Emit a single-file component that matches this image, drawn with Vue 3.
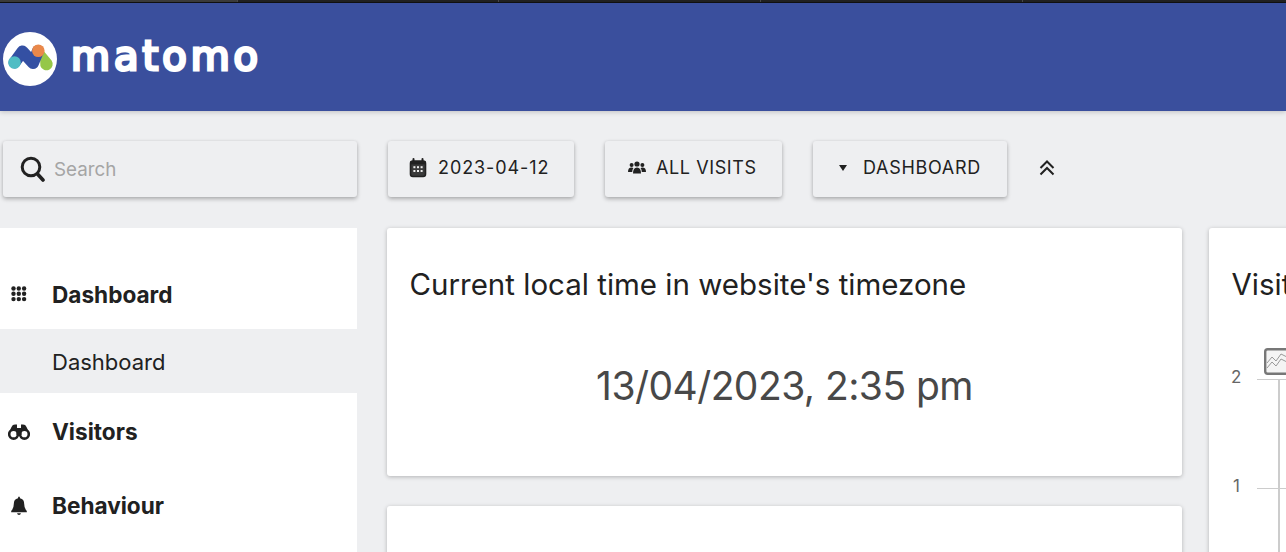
<script setup>
const nav = [
  { label: 'Visitors', icon: 'binoculars' },
  { label: 'Behaviour', icon: 'bell' }
]
const dots = [0, 1, 2]
</script>

<template>
  <div class="page">
    <div class="strip">
      <i class="tab on"></i><i class="tab"></i><i class="tab"></i><i class="tab"></i><i class="tab last"></i>
    </div>
    <header class="navbar">
      <svg class="logo-mark" width="54" height="54" viewBox="0 0 54 54" aria-hidden="true">
        <circle cx="27" cy="27" r="27" fill="#fff" />
        <path d="M36.5 14 L48.6 28.5 A6.3 6.3 0 1 1 37.4 34 Z" fill="#95c748"/>
        <path d="M11.5 30.5 L19.5 19.5 L30 31 L35 19" fill="none" stroke="#3450a3" stroke-width="12" stroke-linecap="round" stroke-linejoin="round"/>
        <circle cx="11.5" cy="30.5" r="6.3" fill="#4fbdc4" />
        <circle cx="35.3" cy="18.7" r="6.3" fill="#e9884a" />
      </svg>
      <span class="wordmark">matomo</span>
    </header>

    <div class="content">
      <aside class="side">
        <div class="search card-raised">
          <svg width="25" height="26" viewBox="0 0 25 26" aria-hidden="true">
            <circle cx="11" cy="11" r="8.8" fill="none" stroke="#212121" stroke-width="3" />
            <path d="M17.5 18 L23 24" stroke="#212121" stroke-width="3.6" stroke-linecap="round" />
          </svg>
          <span class="placeholder">Search</span>
        </div>

        <nav class="menu">
          <div class="menu-head first">
            <span class="menu-icon">
              <svg width="16" height="16" viewBox="0 0 16 16" aria-hidden="true">
                <g fill="#212121">
                  <template v-for="r in dots" :key="r">
                    <circle v-for="c in dots" :key="c" :cx="2.5 + c * 5.3" :cy="2.5 + r * 5.3" r="2.2" />
                  </template>
                </g>
              </svg>
            </span>
            <span>Dashboard</span>
          </div>
          <div class="menu-sub">Dashboard</div>
          <div v-for="item in nav" :key="item.label" class="menu-head" :class="item.icon">
            <span class="menu-icon">
              <svg v-if="item.icon === 'binoculars'" width="22" height="16" viewBox="0 0 22 16" aria-hidden="true">
                <path d="M3.5 3 Q4.5 0.6 7 0.6 H9 V4 H13 V0.6 H15 Q17.5 0.6 18.5 3 L21.8 10 H0.2 Z" fill="#212121"/>
                <circle cx="5.6" cy="10.2" r="4.4" fill="#fff" stroke="#212121" stroke-width="2.6"/>
                <circle cx="16.4" cy="10.2" r="4.4" fill="#fff" stroke="#212121" stroke-width="2.6"/>
                <rect x="8.5" y="4" width="5" height="7" fill="#212121"/>
              </svg>
              <svg v-else width="16" height="20" viewBox="0 0 16 20" aria-hidden="true">
                <path d="M8 0.6 Q9 0.6 9 2.2 Q13.2 3 13.2 8 Q13.2 12.4 15.8 15 V16.3 H0.2 V15 Q2.8 12.4 2.8 8 Q2.8 3 7 2.2 Q7 0.6 8 0.6 Z" fill="#212121"/>
                <path d="M6 17.3 H10 Q9.6 19 8 19 Q6.4 19 6 17.3 Z" fill="#212121"/>
              </svg>
            </span>
            <span>{{ item.label }}</span>
          </div>
        </nav>
      </aside>

      <main class="main">
        <div class="toolbar">
          <div class="btn card-raised date">
            <svg width="18" height="20" viewBox="0 0 18 20" aria-hidden="true">
              <path d="M4.5 1 V4 M13.5 1 V4" stroke="#212121" stroke-width="2" stroke-linecap="round"/>
              <rect x="1.5" y="3" width="15" height="15.5" rx="2.4" fill="#3a3a3a" stroke="#212121" stroke-width="1.6"/>
              <rect x="1.5" y="3" width="15" height="3.4" fill="#212121"/>
              <g fill="#eee">
                <rect x="4.4" y="8.2" width="2" height="2"/><rect x="8" y="8.2" width="2" height="2"/><rect x="11.6" y="8.2" width="2" height="2"/>
                <rect x="4.4" y="12" width="2" height="2"/><rect x="8" y="12" width="2" height="2"/><rect x="11.6" y="12" width="2" height="2"/>
              </g>
            </svg>
            <span>2023-04-12</span>
          </div>
          <div class="btn card-raised segment">
            <svg width="18" height="13" viewBox="0 0 18 13" aria-hidden="true">
              <g fill="#212121">
                <circle cx="9" cy="3" r="2.6"/><circle cx="3.6" cy="4" r="2"/><circle cx="14.4" cy="4" r="2"/>
                <path d="M0 11 Q0 6.6 3.6 6.6 Q5 6.6 5.4 7.2 Q4.2 8.4 4.2 11 Z"/>
                <path d="M18 11 Q18 6.6 14.4 6.6 Q13 6.6 12.6 7.2 Q13.8 8.4 13.8 11 Z"/>
                <path d="M5 12.4 Q5 6.4 9 6.4 Q13 6.4 13 12.4 Z"/>
              </g>
            </svg>
            <span>ALL VISITS</span>
          </div>
          <div class="btn card-raised dash">
            <svg width="8" height="6" viewBox="0 0 8 6" aria-hidden="true"><path d="M0 0 H8 L4 6 Z" fill="#212121"/></svg>
            <span>DASHBOARD</span>
          </div>
          <svg class="collapse" width="18" height="18" viewBox="0 0 18 18" aria-hidden="true">
            <path d="M2.5 9 L9 2.5 L15.5 9 M2.5 15.5 L9 9 L15.5 15.5" fill="none" stroke="#212121" stroke-width="2"/>
          </svg>
        </div>

        <div class="columns">
          <div class="col">
            <section class="card tall">
              <h2>Current local time in website's timezone</h2>
              <p class="clock">13/04/2023, 2:35 pm</p>
            </section>
            <section class="card lower">
              <h2>Visits by Local Time</h2>
            </section>
          </div>
          <div class="col right">
            <section class="card chart-card">
              <h2>Visits</h2>
              <div class="chart">
                <svg class="chart-icon" width="28" height="27" viewBox="0 0 28 27" aria-hidden="true">
                  <rect x="1.2" y="1.2" width="25.6" height="24.6" rx="2.5" fill="#f4f4f4" stroke="#777" stroke-width="2.4"/>
                  <path d="M3 15 L8 9 L12 13 L17 6 L25 10" fill="none" stroke="#999" stroke-width="1"/>
                  <path d="M3 20 L8 14 L12 18 L17 11 L25 15" fill="none" stroke="#999" stroke-width="1"/>
                </svg>
                <div class="axis"></div>
                <div class="tick t2"><span>2</span><i></i></div>
                <div class="tick t1"><span>1</span><i></i></div>
              </div>
            </section>
          </div>
        </div>
      </main>
    </div>
  </div>
</template>

<style>
html, body { margin: 0; overflow: hidden; background: #eeeff1; }
</style>

<style scoped>
.page {
  width: 1286px;
  height: 552px;
  overflow: hidden;
  background: #eeeff1;
  font-family: Inter, "Liberation Sans", sans-serif;
  color: #212121;
}
.strip {
  height: 3px;
  box-sizing: border-box;
  border-bottom: 1px solid #111;
  background: #222;
  display: grid;
  grid-template-columns: 238px 261px 262px 262px 1fr;
}
.tab { display: block; border-right: 1px solid #4a4a4a; }
.tab.on { background: #3c3c3c; }
.tab.last { border-right: 0; }
.navbar {
  height: 108px;
  background: #3a4f9d;
  display: flex;
  align-items: center;
  padding: 0 0 0 3px;
  box-sizing: border-box;
  box-shadow: 0 1px 5px rgba(0, 0, 0, .2);
  position: relative;
}
.logo-mark { margin-top: 3px; }
.wordmark {
  margin-left: 14px;
  margin-top: -3px;
  color: #fff;
  font-family: "DejaVu Sans", sans-serif;
  font-weight: 400;
  font-size: 40px;
  line-height: 1;
  letter-spacing: 4px;
  -webkit-text-stroke: 3px #fff;
}
.content {
  display: flex;
  padding-top: 30px;
}
.side { width: 357px; flex: none; }
.card-raised {
  background: #eeeff1;
  border-radius: 3px;
  box-shadow: 0 2px 4px rgba(0, 0, 0, .28), 0 0 3px rgba(0, 0, 0, .06);
}
.search {
  margin-left: 3px;
  height: 56px;
  display: flex;
  align-items: center;
  padding-left: 17px;
  gap: 9px;
}
.placeholder { font-size: 18.8px; color: #a5a5a5; }
.menu {
  margin-top: 31px;
  background: #fff;
  height: 324px;
  font-size: 22.6px;
  font-weight: 700;
}
.menu-head {
  display: flex;
  align-items: center;
  height: 74px;
  padding-top: 3px;
  box-sizing: border-box;
}
.menu-head.first { height: 101px; padding-top: 31px; }
.menu-icon {
  width: 52px;
  flex: none;
  display: flex;
  justify-content: flex-start;
  padding-left: 11px;
  box-sizing: border-box;
}
.binoculars .menu-icon { padding-left: 8px; }
.menu-sub {
  height: 64px;
  box-sizing: border-box;
  display: flex;
  align-items: center;
  padding: 2px 0 0 52px;
  background: #eeeff1;
  font-size: 22px;
  font-weight: 400;
}
.main { margin-left: 31px; flex: none; width: 898px; }
.toolbar {
  height: 56px;
  display: flex;
  align-items: center;
  gap: 31px;
}
.btn {
  height: 56px;
  box-sizing: border-box;
  display: flex;
  align-items: center;
  padding-bottom: 3px;
  font-size: 18px;
  letter-spacing: .6px;
  flex: none;
}
.btn span { white-space: nowrap; }
.date { width: 186px; padding-left: 21px; gap: 11px; letter-spacing: .9px; }
.segment { width: 177px; padding-left: 23px; gap: 10px; }
.dash { width: 194px; padding-left: 26px; gap: 16px; letter-spacing: .7px; }
.collapse { margin-top: -3px; }
.columns {
  margin-top: 31px;
  margin-left: -1px;
  display: flex;
  gap: 27px;
}
.col { width: 795px; flex: none; display: flex; flex-direction: column; gap: 30px; }
.col.right { width: 400px; }
.card {
  background: #fff;
  border-radius: 3px;
  padding: 38px 23px 0 23px;
  height: 248px;
  box-sizing: border-box;
  box-shadow: 0 1px 4px rgba(0, 0, 0, .25);
}
.card.lower { padding-top: 39px; }
.card h2 {
  margin: 0 0 0 -.5px;
  font-size: 29.5px;
  line-height: 36px;
  font-weight: 400;
  color: #212121;
  white-space: nowrap;
}
.clock {
  margin: 61px 0 0;
  text-align: center;
  font-size: 39px;
  line-height: 46px;
  letter-spacing: -.55px;
  color: #484848;
}
.chart-card { height: 400px; }
.chart { position: relative; }
.chart-icon { position: absolute; left: 32px; top: 46px; }
.axis {
  position: absolute;
  left: 46px;
  top: 77px;
  width: 2px;
  height: 240px;
  background: #ccc;
}
.tick { position: absolute; left: -1px; display: flex; align-items: center; font-size: 17px; color: #666; }
.tick span { width: 9px; text-align: right; margin-right: 17px; position: relative; top: -2px; }
.tick i { display: block; width: 60px; height: 1px; background: #ccc; }
.tick.t2 { top: 67px; }
.tick.t1 { top: 176px; }
</style>
